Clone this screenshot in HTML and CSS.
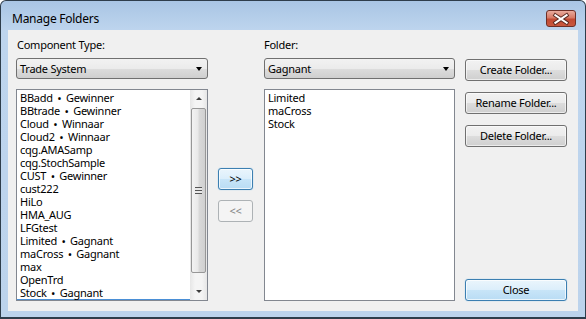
FILE: index.html
```html
<!DOCTYPE html>
<html lang="en">
<head>
    <meta charset="UTF-8">
    <title>Manage Folders</title>
    <link rel="stylesheet" href="styles.css">
</head>
<body>
    <div class="janela">
        <div class="titulo">
            <span class="titulo-texto">Manage Folders</span>
            <span class="fechar-x">
                <svg width="30" height="16" viewBox="0 0 30 16">
                    <path d="M9 4 L21 12 M21 4 L9 12" stroke="#5a2a22" stroke-width="4.2" stroke-linecap="square"/>
                    <path d="M9 4 L21 12 M21 4 L9 12" stroke="#fff" stroke-width="2.2" stroke-linecap="square"/>
                </svg>
            </span>
        </div>
        <div class="cliente">
            <div class="rotulo r-tipo">Component Type:</div>
            <div class="rotulo r-pasta">Folder:</div>

            <div class="combo c-tipo">Trade System<span class="seta"></span></div>
            <div class="combo c-pasta">Gagnant<span class="seta"></span></div>

            <div class="lista l-componentes">
                <ul class="itens">
                    <li>BBadd<b class="ponto">&bull;</b>Gewinner</li>
                    <li>BBtrade<b class="ponto">&bull;</b>Gewinner</li>
                    <li>Cloud<b class="ponto">&bull;</b>Winnaar</li>
                    <li>Cloud2<b class="ponto">&bull;</b>Winnaar</li>
                    <li>cqg.AMASamp</li>
                    <li>cqg.StochSample</li>
                    <li>CUST<b class="ponto">&bull;</b>Gewinner</li>
                    <li>cust222</li>
                    <li>HiLo</li>
                    <li>HMA_AUG</li>
                    <li>LFGtest</li>
                    <li>Limited<b class="ponto">&bull;</b>Gagnant</li>
                    <li>maCross<b class="ponto">&bull;</b>Gagnant</li>
                    <li>max</li>
                    <li>OpenTrd</li>
                    <li class="foco">Stock<b class="ponto">&bull;</b>Gagnant</li>
                </ul>
                <div class="rolagem">
                    <div class="rol-botao"><span class="tri-cima"></span></div>
                    <div class="rol-trilho">
                        <div class="rol-polegar"><span class="grip"></span></div>
                    </div>
                    <div class="rol-botao"><span class="tri-baixo"></span></div>
                </div>
            </div>

            <div class="mover">
                <div class="botao padrao">&gt;&gt;</div>
                <div class="botao desativado">&lt;&lt;</div>
            </div>

            <div class="lista l-pasta">
                <ul class="itens">
                    <li>Limited</li>
                    <li>maCross</li>
                    <li>Stock</li>
                </ul>
            </div>

            <div class="laterais">
                <div class="botao">Create Folder...</div>
                <div class="botao">Rename Folder...</div>
                <div class="botao">Delete Folder...</div>
                <div class="botao padrao fechar">Close</div>
            </div>
        </div>
    </div>
</body>
</html>
```

FILE: styles.css
```css
* {
    box-sizing: border-box;
}
body {
    margin: 0;
    background-color: #fff;
    font-family: "Noto Sans", "Open Sans", sans-serif;
    font-size: 11px;
    letter-spacing: -0.25px;
    color: #000;
}
.janela {
    width: 586px;
    height: 319px;
    border: 1px solid #2e3d4b;
    border-bottom-width: 2px;
    border-radius: 6px 6px 0 0;
    background: linear-gradient(#a9c5e4, #bed5ee 30px, #bcd3ec);
    display: flex;
    flex-direction: column;
}
.titulo {
    height: 29px;
    display: flex;
    justify-content: space-between;
    align-items: flex-start;
    padding: 0 9px 0 11px;
}
.titulo-texto {
    margin-top: 10px;
    line-height: 16px;
    font-size: 12px;
}
.fechar-x {
    margin-top: 9px;
    width: 30px;
    height: 17px;
    border: 1px solid #6e2f27;
    border-radius: 3px;
    background: linear-gradient(#e9ab9d, #d77a66 45%, #c24a33 55%, #c9583f);
    display: flex;
    align-items: center;
    justify-content: center;
}
.fechar-x svg {
    display: block;
}
.cliente {
    flex: 1;
    margin: 0 7px 6px 7px;
    background-color: #f0f0f0;
    padding: 0 10px 0 8px;
    display: grid;
    grid-template-columns: 192px 36px 191px 102px;
    grid-template-rows: 28px 31px 212px;
    column-gap: 10px;
    grid-template-areas:
        "r1 . r2 ."
        "c1 . c2 lat"
        "l1 mov l2 lat";
}
.rotulo {
    padding-top: 7px;
    line-height: 16px;
}
.r-tipo { grid-area: r1; padding-left: 1px; }
.r-pasta { grid-area: r2; }
.combo {
    height: 21px;
    border: 1px solid #707070;
    border-radius: 3px;
    background: linear-gradient(#f2f2f2, #ebebeb 50%, #dddddd 50%, #cfcfcf);
    display: flex;
    align-items: center;
    justify-content: space-between;
    padding: 0 5px 0 3px;
    line-height: 16px;
}
.c-tipo { grid-area: c1; }
.c-pasta { grid-area: c2; }
.seta {
    width: 0;
    height: 0;
    border-left: 3.5px solid transparent;
    border-right: 3.5px solid transparent;
    border-top: 4px solid #000;
}
.lista {
    border: 1px solid #828790;
    background-color: #fff;
    display: flex;
}
.l-componentes { grid-area: l1; }
.l-pasta { grid-area: l2; }
.itens {
    list-style: none;
    margin: 0;
    padding: 1px 0 0;
    flex: 1;
}
.itens li {
    line-height: 13px;
    height: 13px;
    padding-left: 3px;
    white-space: nowrap;
}
.itens li.foco {
    height: 14px;
    border-bottom: 1px solid #4a8fd6;
}
.ponto {
    font-weight: 700;
    font-size: 9px;
    margin: 0 5px;
}
.rolagem {
    width: 17px;
    display: flex;
    flex-direction: column;
    background: linear-gradient(to right, #e6e6e6, #f4f4f4 30%, #f4f4f4 70%, #e6e6e6);
}
.rol-botao {
    height: 17px;
    display: flex;
    align-items: center;
    justify-content: center;
}
.tri-cima, .tri-baixo {
    width: 0;
    height: 0;
    border-left: 3px solid transparent;
    border-right: 3px solid transparent;
}
.tri-cima {
    border-bottom: 3px solid #3c3c3c;
}
.tri-baixo {
    border-top: 3px solid #3c3c3c;
}
.rol-trilho {
    flex: 1;
    padding: 1px 1px 0;
}
.rol-polegar {
    height: 165px;
    border: 1px solid #979797;
    border-radius: 2px;
    background: linear-gradient(to right, #f3f3f3, #e9e9e9 45%, #d9d9d9 55%, #d0d0d0);
    display: flex;
    align-items: center;
    justify-content: center;
}
.grip {
    width: 7px;
    height: 7px;
    background: repeating-linear-gradient(#555 0, #555 1px, #e8e8e8 1px, #e8e8e8 3px);
}
.mover {
    grid-area: mov;
    display: flex;
    flex-direction: column;
    gap: 10px;
    padding-top: 79px;
}
.mover .botao {
    width: 35px;
}
.laterais {
    grid-area: lat;
    display: flex;
    flex-direction: column;
    gap: 11px;
    padding-top: 1px;
}
.botao {
    height: 22px;
    border: 1px solid #707070;
    border-radius: 3px;
    background: linear-gradient(#f2f2f2, #ebebeb 50%, #dddddd 50%, #cfcfcf);
    box-shadow: inset 0 0 0 1px rgba(255, 255, 255, 0.6);
    display: flex;
    align-items: center;
    justify-content: center;
    line-height: 16px;
}
.botao.padrao {
    border-color: #3c7fb1;
    background: linear-gradient(#eaf5fc, #dbeefb 50%, #c8e5f8 50%, #b9dcf4);
    box-shadow: inset 0 0 0 1px rgba(255, 255, 255, 0.7), 0 0 1px #6cb6e8;
}
.botao.desativado {
    border-color: #adb2b5;
    background: #f4f4f4;
    box-shadow: none;
    color: #838383;
}
.botao.fechar {
    margin-top: auto;
}
```
